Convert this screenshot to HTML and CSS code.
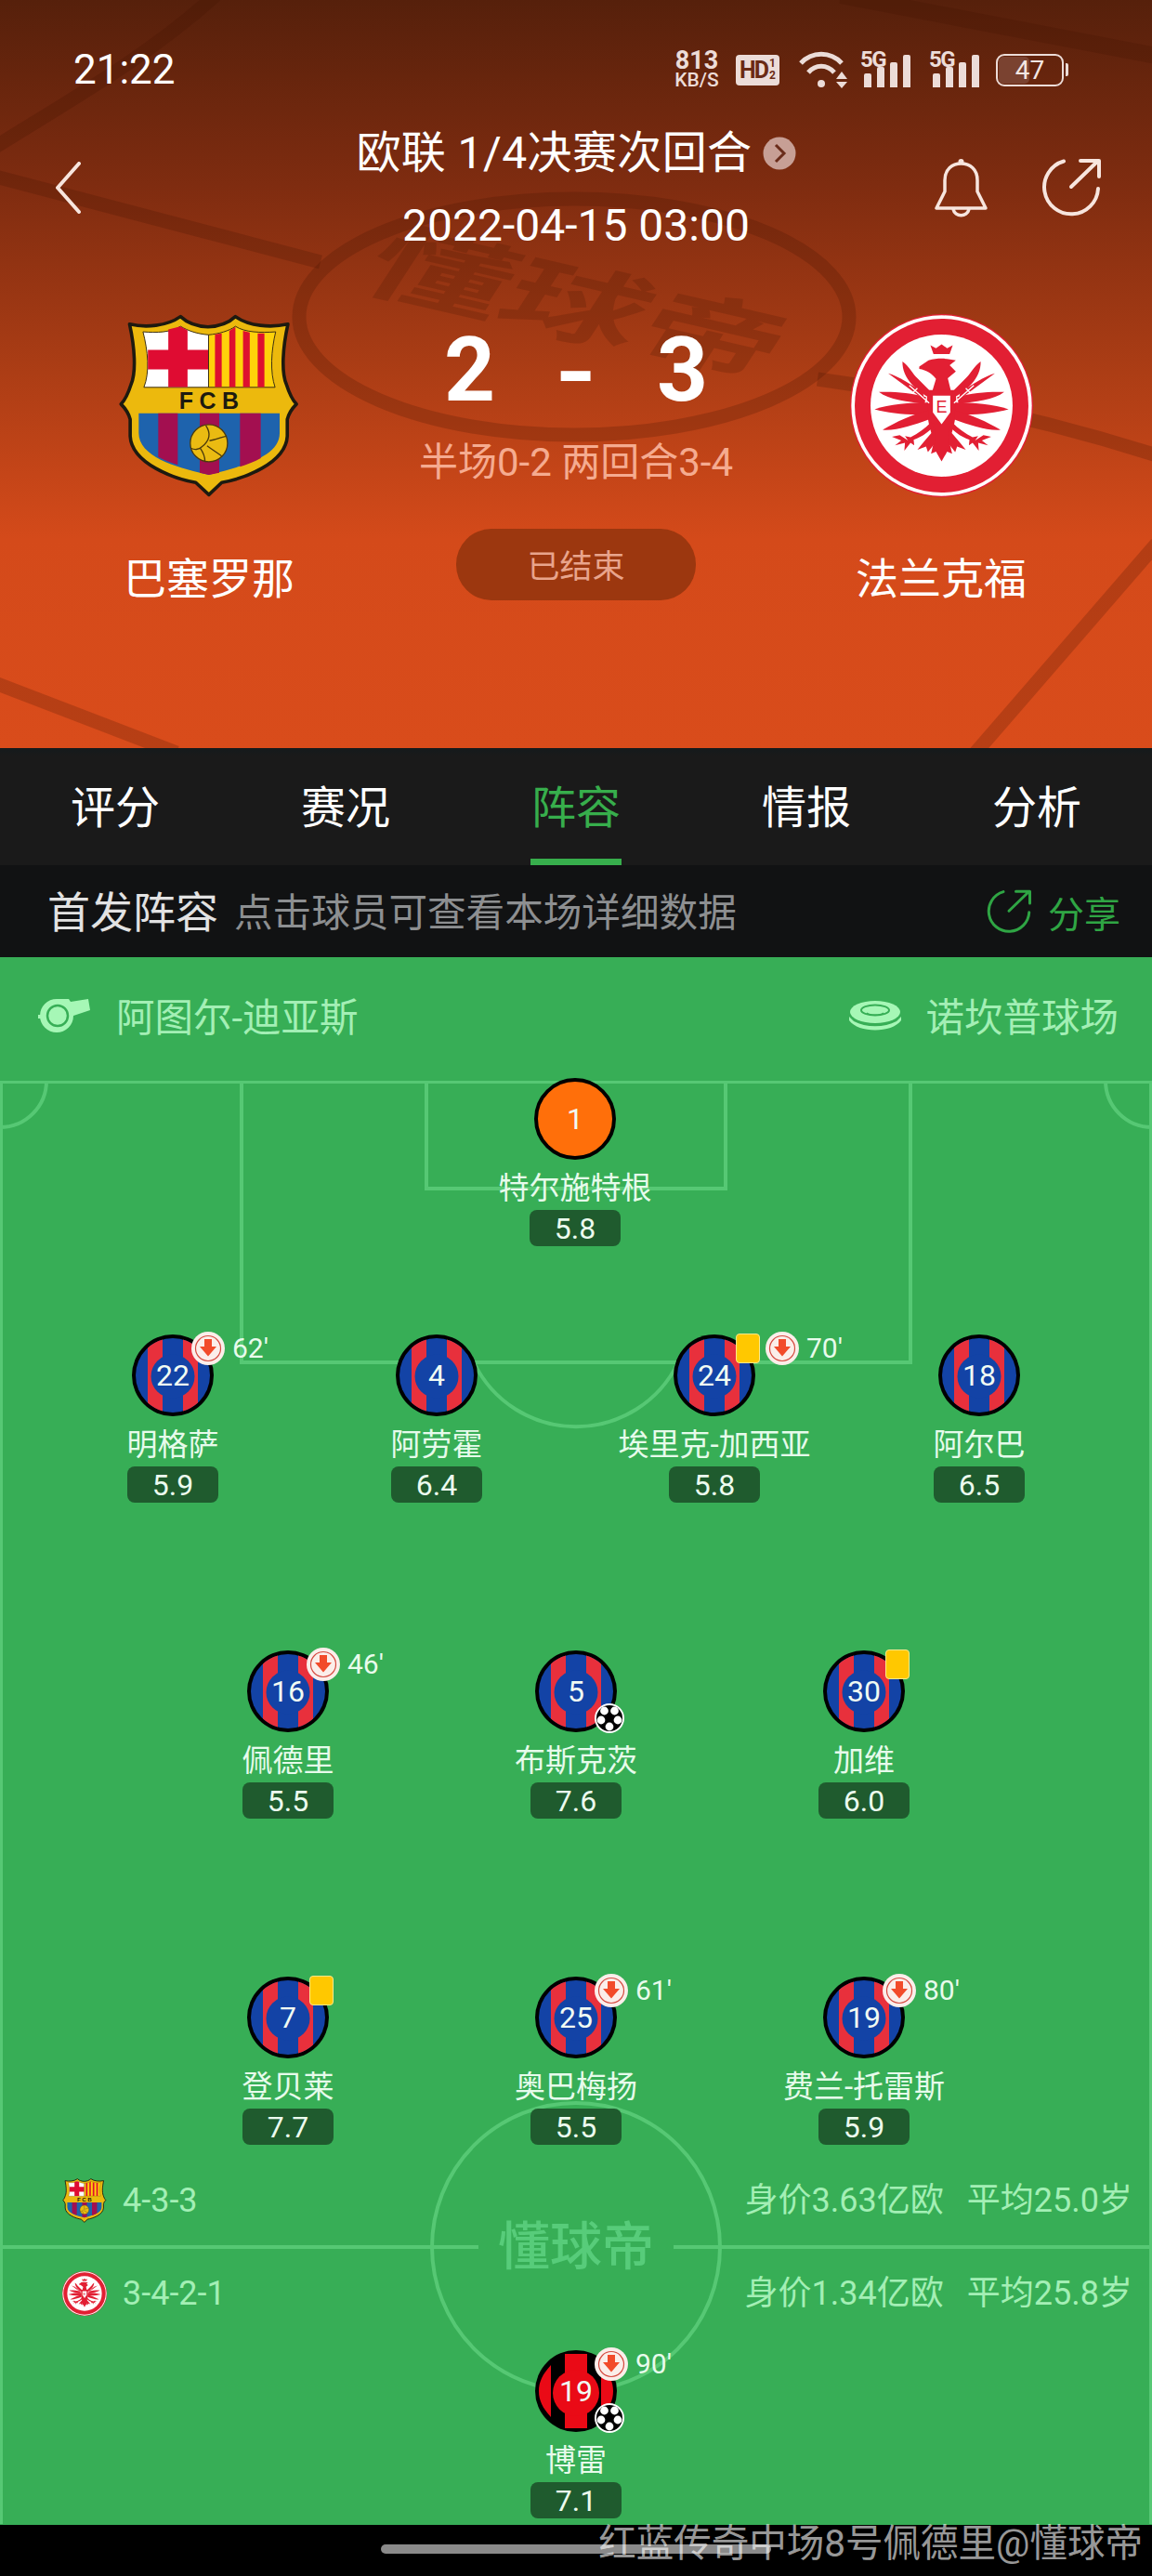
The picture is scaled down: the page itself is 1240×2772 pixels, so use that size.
FILE: index.html
```html
<!DOCTYPE html>
<html lang="zh-CN">
<head>
<meta charset="utf-8">
<title>欧联 1/4决赛次回合 巴塞罗那 2-3 法兰克福</title>
<link rel="stylesheet" href="styles.css">
</head>
<body>
<svg class="defs" width="0" height="0" aria-hidden="true">
  <defs>
    <symbol id="crest-fcb" viewBox="85 80 590 600">
      <path d="M118 113 C170 125 240 120 285 88 C310 112 340 120 375 122 C410 120 440 112 465 88 C510 120 580 125 637 113 C620 190 615 270 632 310 C640 335 650 360 665 375 C650 390 640 405 635 425 L635 480 C630 570 490 620 420 632 L378 672 L335 632 C265 620 125 570 120 480 L120 425 C115 405 105 390 90 375 C105 360 115 335 123 310 C140 270 135 190 118 113 Z" fill="#ecb90d" stroke="#1d1a10" stroke-width="11" stroke-linejoin="round"/>
      <path d="M165 320 C185 270 178 200 162 138 C205 142 255 140 285 120 C310 135 340 145 377 148 V320 Z" fill="#fff" stroke="#3a2e10" stroke-width="3"/>
      <path d="M245 130 L285 120 L308 133 V197 H377 V261 H308 V319 H245 V261 H178 V197 H245 Z" fill="#df0c32"/>
      <path d="M377 148 C410 145 445 135 465 120 C495 140 550 142 597 138 C582 200 578 270 595 320 H377 Z" fill="#ffd20a" stroke="#3a2e10" stroke-width="3"/>
      <path d="M398 146 L420 143 V319 H398 Z M445 135 L465 122 V319 H445 Z M490 135 L512 140 V319 H490 Z M538 143 L560 143 V319 H538 Z" fill="#de0f2f"/>
      <text x="388" y="390" class="crest-text">FCB</text>
      <path d="M148 405 H610 V470 C610 550 480 580 378 607 C280 585 148 550 148 470 Z" fill="#1e63ad"/>
      <path d="M212 405 H276 V574 C255 568 232 558 212 548 Z M348 405 H412 V600 L378 607 L348 600 Z M480 405 H548 V552 C528 564 505 572 480 580 Z" fill="#a30f50"/>
      <circle cx="378" cy="503" r="61" fill="#eabb12" stroke="#4b3a0c" stroke-width="4"/>
      <path d="M368 445 C385 470 380 495 355 515 C345 525 330 525 320 520 M380 495 C410 490 425 480 436 480 M372 512 C390 525 405 535 420 545 M350 520 C360 535 365 550 365 562" fill="none" stroke="#4b3a0c" stroke-width="4"/>
    </symbol>

    <g id="sge-wing">
      <path d="M302 325 C262 305 212 262 214 208 C235 222 248 250 262 262 L305 305 Z"/>
      <path d="M285 332 L168 246 C198 254 245 284 280 308 Z"/>
      <path d="M285 345 C232 337 170 332 138 306 C182 304 240 308 290 322 Z"/>
      <path d="M295 378 C230 382 170 374 124 362 C170 344 240 340 295 340 Z"/>
      <path d="M298 395 C252 412 192 432 150 428 C190 404 250 376 298 365 Z"/>
      <path d="M305 405 C285 425 265 440 240 452 L222 448 L232 462 L205 445 L180 450 L210 462 L190 478 L222 470 L220 495 L240 470 L252 478 L250 460 C280 450 305 430 320 410 Z"/>
      <path d="M320 425 C300 445 280 470 262 492 L290 482 L296 500 L318 472 Z"/>
    </g>
    <symbol id="crest-sge" viewBox="45 55 590 590">
      <circle cx="340" cy="350" r="295" fill="#e21f33"/>
      <circle cx="340" cy="350" r="291" fill="#fff"/>
      <circle cx="340" cy="350" r="280" fill="#e21f33"/>
      <circle cx="340" cy="350" r="229" fill="#fff"/>
      <g fill="#e21f33">
        <path d="M304 155 L322 165 L340 152 L358 165 L376 155 L366 184 H314 Z"/>
        <path d="M268 224 L298 204 C330 195 360 198 386 204 L366 220 L386 240 L360 262 L372 310 H308 L322 264 C310 248 292 236 268 232 Z"/>
        <path d="M296 300 C286 360 298 420 316 462 L306 505 L322 498 L340 530 L358 498 L374 505 L364 462 C382 420 394 360 384 300 Z"/>
        <use href="#sge-wing"/>
        <use href="#sge-wing" transform="translate(680 0) scale(-1 1)"/>
      </g>
      <path d="M236 285 L300 342 M246 310 L262 294 M444 285 L380 342 M434 310 L418 294" fill="none" stroke="#fff" stroke-width="4"/>
      <path d="M312 318 H368 V372 L340 410 L312 372 Z" fill="#fff"/>
      <text x="340" y="372" class="crest-e">E</text>
    </symbol>

    <symbol id="kit-barca" viewBox="0 0 88 88">
      <circle cx="44" cy="44" r="44" fill="#000"/>
      <circle cx="44" cy="44" r="40" fill="#1343a6"/>
      <path d="M17 14.5 A40 40 0 0 1 33 5.5 V82.5 A40 40 0 0 1 17 73.5 Z M55 5.5 A40 40 0 0 1 71 14.5 V73.5 A40 40 0 0 1 55 82.5 Z" fill="#e8303c"/>
      <circle cx="44" cy="45" r="23.5" fill="#1343a6"/>
    </symbol>
    <symbol id="kit-sge" viewBox="0 0 88 88">
      <circle cx="44" cy="44" r="44" fill="#000"/>
      <path d="M17 16 V72 C8 62 4 54 4 44 C4 34 8 26 17 16 Z M71 16 C80 26 84 34 84 44 C84 54 80 62 71 72 Z" fill="#ea0a16"/>
      <path d="M32 4 H56 V84 H32 Z" fill="#ea0a16"/>
      <circle cx="44" cy="46" r="25" fill="#ea0a16"/>
    </symbol>
    <symbol id="sub-off" viewBox="0 0 36 36">
      <circle cx="18" cy="18" r="18" fill="#fbeeea"/>
      <circle cx="18" cy="18" r="13.5" fill="none" stroke="#d5493f" stroke-width="1.2"/>
      <path d="M14 8 H22 V16 H27 L18 26.5 L9 16 H14 Z" fill="#f24b2a"/>
    </symbol>
    <symbol id="ball" viewBox="0 0 32 32">
      <circle cx="16" cy="16" r="16" fill="#fff"/>
      <circle cx="16" cy="16" r="14" fill="#000"/>
      <g fill="#fff">
        <circle cx="10.5" cy="8" r="4.4"/><circle cx="21.5" cy="8" r="4.4"/>
        <circle cx="7" cy="18" r="4.4"/><circle cx="25" cy="18" r="4.4"/>
        <circle cx="16" cy="25" r="4.4"/>
      </g>
    </symbol>
    <symbol id="share" viewBox="0 0 64 64">
      <g fill="none" stroke="currentColor" stroke-width="4" stroke-linecap="round" stroke-linejoin="round">
        <path d="M24 3.5 A29 29 0 1 0 61 33"/>
        <path d="M32 31 L61 3 M42 3 H62 V20"/>
      </g>
    </symbol>
    <symbol id="signal" viewBox="0 0 54 38">
      <path d="M4 25 q0-2 2-2 h4 q2 0 2 2 v13 h-8 Z M18 18 q0-2 2-2 h4 q2 0 2 2 v20 h-8 Z M32 13 q0-2 2-2 h4 q2 0 2 2 v25 h-8 Z M46 5 q0-2 2-2 h4 q2 0 2 2 v33 h-8 Z" fill="#ecdcd8"/>
    </symbol>
  </defs>
</svg>

<div class="screen">
  <header class="hero">
    <svg class="hero-lines" viewBox="0 0 1240 805" aria-hidden="true">
      <g fill="none" stroke="#3f1400" stroke-opacity=".22" stroke-width="15">
        <path d="M232 -5 C160 60 80 105 -5 158"/>
        <path d="M-5 190 L345 282"/>
        <path d="M905 -5 L1245 60" stroke-width="18"/>
        <ellipse cx="618" cy="341" rx="296" ry="127" stroke-width="15"/>
        <path d="M880 408 C1000 425 1120 450 1245 490"/>
        <path d="M-5 735 L190 810"/>
        <path d="M1245 585 L1050 810"/>
      </g>
    </svg>
    <div class="hero-mark" aria-hidden="true">懂球帝</div>

    <div class="status">
      <span class="clock">21:22</span>
      <div class="status-icons">
        <div class="net"><b>813</b><span>KB/S</span></div>
        <div class="hd">HD<span class="frac"><i>1</i><i>2</i></span></div>
        <svg class="wifi" viewBox="0 0 52 40" aria-hidden="true">
          <g fill="none" stroke="#ecdcd8" stroke-width="5">
            <path d="M2 13 C14 0 34 0 46 13"/>
            <path d="M10 23 C18 14 30 14 38 23"/>
          </g>
          <circle cx="24" cy="35" r="4" fill="#ecdcd8"/>
          <path d="M46 22 L52 30 H40 Z M40 33 H52 L46 40 Z" fill="#ecdcd8"/>
        </svg>
        <div class="sim"><span class="sim-tag">5G</span><svg class="sim-bars" aria-hidden="true"><use href="#signal"/></svg></div>
        <div class="sim"><span class="sim-tag">5G</span><svg class="sim-bars" aria-hidden="true"><use href="#signal"/></svg></div>
        <div class="battery"><div class="cell"><i class="charge"></i><span>47</span></div><i class="tip"></i></div>
      </div>
    </div>

    <div class="nav">
      <svg class="back" viewBox="0 0 30 56" aria-hidden="true"><path d="M26 2 L3 28 L26 54" fill="none" stroke="#f7e5de" stroke-width="4" stroke-linecap="round" stroke-linejoin="round"/></svg>
      <div class="fixture">
        <div class="round">
          <span>欧联 1/4决赛次回合</span>
          <svg class="more" viewBox="0 0 36 36" aria-hidden="true"><circle cx="18" cy="18" r="17.5" fill="#c79f95"/><path d="M14 9 L23 18 L14 27" fill="none" stroke="#6a2c1a" stroke-width="3"/></svg>
        </div>
        <div class="kickoff">2022-04-15 03:00</div>
      </div>
      <div class="actions">
        <svg class="bell" viewBox="0 0 57 64" aria-hidden="true">
          <path d="M2 54 H55 L46 36 V24 C46 12 38 6 28.5 6 C19 6 11 12 11 24 V36 Z M20 55 C22 64 35 64 37 55" fill="none" stroke="#f7e5de" stroke-width="3.5" stroke-linejoin="round"/>
          <circle cx="28.5" cy="4" r="3" fill="#f7e5de"/>
        </svg>
        <svg class="share-top" aria-hidden="true"><use href="#share"/></svg>
      </div>
    </div>

    <div class="scoreboard">
      <div class="team">
        <svg class="crest" aria-hidden="true"><use href="#crest-fcb"/></svg>
        <div class="team-name">巴塞罗那</div>
      </div>
      <div class="result">
        <div class="score"><span>2</span><span class="dash">-</span><span>3</span></div>
        <div class="aggregate">半场0-2 两回合3-4</div>
        <div class="state">已结束</div>
      </div>
      <div class="team">
        <svg class="crest" aria-hidden="true"><use href="#crest-sge"/></svg>
        <div class="team-name">法兰克福</div>
      </div>
    </div>
  </header>

  <nav class="tabs">
    <a class="tab">评分</a>
    <a class="tab">赛况</a>
    <a class="tab active">阵容</a>
    <a class="tab">情报</a>
    <a class="tab">分析</a>
  </nav>

  <div class="lineup-bar">
    <strong>首发阵容</strong>
    <span class="hint">点击球员可查看本场详细数据</span>
    <span class="share-link"><svg class="share-small" aria-hidden="true"><use href="#share"/></svg>分享</span>
  </div>

  <section class="pitch">
    <div class="venue">
      <div class="venue-item">
        <svg class="whistle" viewBox="0 0 56 36" aria-hidden="true">
          <path d="M20 0 H33 L35 3 L54 0 L56 12 L38 18 A18 18 0 1 1 20 0 Z" fill="#a6f7b6"/>
          <rect x="0" y="17" width="4" height="4" fill="#a6f7b6"/>
          <circle cx="21" cy="18" r="11" fill="#a6f7b6" stroke="#37ae56" stroke-width="2.5"/>
        </svg>
        <span>阿图尔-迪亚斯</span>
      </div>
      <div class="venue-item">
        <svg class="stadium" viewBox="0 0 56 32" aria-hidden="true">
          <path d="M0 17 L5 22 C18 29 38 29 51 22 L56 17 V21 C46 35 10 35 0 21 Z" fill="#a6f7b6"/>
          <ellipse cx="28" cy="12" rx="27" ry="12" fill="#a6f7b6"/>
          <ellipse cx="28" cy="10" rx="15" ry="5.5" fill="none" stroke="#37ae56" stroke-width="2"/>
          <path d="M19 13 C23 16 33 16 37 13" fill="none" stroke="#37ae56" stroke-width="1.5"/>
        </svg>
        <span>诺坎普球场</span>
      </div>
    </div>

    <div class="field">
      <svg class="field-lines" viewBox="0 0 1240 1553" aria-hidden="true">
        <g fill="none" stroke="#56c874" stroke-width="4">
          <path d="M0 1.5 H1240" stroke-width="3"/>
          <path d="M1.5 0 V1553 M1238.5 0 V1553" stroke-width="3"/>
          <path d="M50 0 A50 50 0 0 1 0 50 M1190 0 A50 50 0 0 0 1240 50"/>
          <path d="M260 0 V303 H980 V0"/>
          <path d="M459 0 V116 H781 V0"/>
          <path d="M510 303 A122 122 0 0 0 730 303"/>
          <path d="M0 1255 H515 M725 1255 H1240"/>
          <circle cx="620" cy="1255" r="155"/>
        </g>
      </svg>
      <div class="field-mark">懂球帝</div>

      <div class="team-stat home-stat">
        <div class="formation"><svg class="mini-crest" aria-hidden="true"><use href="#crest-fcb"/></svg>4-3-3</div>
        <div class="value"><span>身价3.63亿欧</span><span>平均25.0岁</span></div>
      </div>
      <div class="team-stat away-stat">
        <div class="formation"><svg class="mini-crest" aria-hidden="true"><use href="#crest-sge"/></svg>3-4-2-1</div>
        <div class="value"><span>身价1.34亿欧</span><span>平均25.8岁</span></div>
      </div>

      <div class="player" style="left:619px;top:-3px">
        <div class="avatar keeper"><span>1</span></div>
        <div class="name">特尔施特根</div><div class="rating">5.8</div>
      </div>

      <div class="player" style="left:186px;top:273px">
        <div class="avatar"><svg class="kit" aria-hidden="true"><use href="#kit-barca"/></svg><span>22</span>
          <div class="marks"><svg class="sub" aria-hidden="true"><use href="#sub-off"/></svg><em>62'</em></div></div>
        <div class="name">明格萨</div><div class="rating">5.9</div>
      </div>
      <div class="player" style="left:470px;top:273px">
        <div class="avatar"><svg class="kit" aria-hidden="true"><use href="#kit-barca"/></svg><span>4</span></div>
        <div class="name">阿劳霍</div><div class="rating">6.4</div>
      </div>
      <div class="player" style="left:769px;top:273px">
        <div class="avatar"><svg class="kit" aria-hidden="true"><use href="#kit-barca"/></svg><span>24</span>
          <div class="marks"><i class="card"></i><svg class="sub" aria-hidden="true"><use href="#sub-off"/></svg><em>70'</em></div></div>
        <div class="name">埃里克-加西亚</div><div class="rating">5.8</div>
      </div>
      <div class="player" style="left:1054px;top:273px">
        <div class="avatar"><svg class="kit" aria-hidden="true"><use href="#kit-barca"/></svg><span>18</span></div>
        <div class="name">阿尔巴</div><div class="rating">6.5</div>
      </div>

      <div class="player" style="left:310px;top:613px">
        <div class="avatar"><svg class="kit" aria-hidden="true"><use href="#kit-barca"/></svg><span>16</span>
          <div class="marks"><svg class="sub" aria-hidden="true"><use href="#sub-off"/></svg><em>46'</em></div></div>
        <div class="name">佩德里</div><div class="rating">5.5</div>
      </div>
      <div class="player" style="left:620px;top:613px">
        <div class="avatar"><svg class="kit" aria-hidden="true"><use href="#kit-barca"/></svg><span>5</span>
          <svg class="goal" aria-hidden="true"><use href="#ball"/></svg></div>
        <div class="name">布斯克茨</div><div class="rating">7.6</div>
      </div>
      <div class="player" style="left:930px;top:613px">
        <div class="avatar"><svg class="kit" aria-hidden="true"><use href="#kit-barca"/></svg><span>30</span>
          <div class="marks"><i class="card"></i></div></div>
        <div class="name">加维</div><div class="rating">6.0</div>
      </div>

      <div class="player" style="left:310px;top:964px">
        <div class="avatar"><svg class="kit" aria-hidden="true"><use href="#kit-barca"/></svg><span>7</span>
          <div class="marks"><i class="card"></i></div></div>
        <div class="name">登贝莱</div><div class="rating">7.7</div>
      </div>
      <div class="player" style="left:620px;top:964px">
        <div class="avatar"><svg class="kit" aria-hidden="true"><use href="#kit-barca"/></svg><span>25</span>
          <div class="marks"><svg class="sub" aria-hidden="true"><use href="#sub-off"/></svg><em>61'</em></div></div>
        <div class="name">奥巴梅扬</div><div class="rating">5.5</div>
      </div>
      <div class="player" style="left:930px;top:964px">
        <div class="avatar"><svg class="kit" aria-hidden="true"><use href="#kit-barca"/></svg><span>19</span>
          <div class="marks"><svg class="sub" aria-hidden="true"><use href="#sub-off"/></svg><em>80'</em></div></div>
        <div class="name">费兰-托雷斯</div><div class="rating">5.9</div>
      </div>

      <div class="player" style="left:620px;top:1366px">
        <div class="avatar"><svg class="kit" aria-hidden="true"><use href="#kit-sge"/></svg><span>19</span>
          <div class="marks"><svg class="sub" aria-hidden="true"><use href="#sub-off"/></svg><em>90'</em></div>
          <svg class="goal" aria-hidden="true"><use href="#ball"/></svg></div>
        <div class="name">博雷</div><div class="rating">7.1</div>
      </div>
    </div>
  </section>

  <footer class="gesture-bar"><i class="home-pill"></i></footer>
  <div class="credit">红蓝传奇中场8号佩德里@懂球帝</div>
</div>
</body>
</html>
```
FILE: styles.css
```css
* { box-sizing: border-box; }
html, body { margin: 0; padding: 0; background: #000; }
body { font-family: Roboto, "Noto Sans CJK SC", sans-serif; }
.defs { position: absolute; }
.screen { position: relative; width: 1240px; height: 2772px; overflow: hidden; }

.crest-text { font: 700 76px "Liberation Sans", sans-serif; letter-spacing: 20px; fill: #1d1a10; text-anchor: middle; }
.crest-e { font: 400 54px "Liberation Sans", sans-serif; fill: #e21f33; text-anchor: middle; }

/* Header */
.hero {
  position: relative;
  height: 805px;
  overflow: hidden;
  color: #fdf3ee;
  background: linear-gradient(180deg, #56200b 0, #7f2c10 200px, #ac3d15 400px, #d44a1a 580px, #d94c1b 805px);
}
.hero-lines { position: absolute; inset: 0; width: 1240px; height: 805px; }
.hero-mark {
  position: absolute;
  left: 390px;
  top: 245px;
  width: 460px;
  font-size: 150px;
  line-height: 170px;
  font-weight: 700;
  text-align: center;
  white-space: nowrap;
  color: rgba(63, 20, 0, .2);
  transform: rotate(13deg) skewX(-20deg) scaleY(.62);
}
.status, .nav, .scoreboard { position: relative; }

.status { display: flex; justify-content: space-between; align-items: center; height: 70px; margin-top: 40px; padding: 0 90px 0 79px; }
.clock { font-size: 44px; line-height: 50px; color: #fff; }
.status-icons { display: flex; align-items: center; color: #ecdcd8; }
.net { display: flex; flex-direction: column; align-items: center; width: 50px; margin-right: 17px; }
.net b { font-size: 27px; line-height: 21px; font-weight: 700; }
.net span { font-size: 21px; line-height: 20px; font-weight: 500; }
.hd { display: flex; align-items: center; justify-content: center; width: 47px; height: 33px; margin-right: 21px; border-radius: 4px; background: #ecdcd8; color: #6a2a14; font-size: 25px; line-height: 1; font-weight: 700; letter-spacing: -2px; }
.frac { display: flex; flex-direction: column; margin-left: 2px; font-size: 12px; line-height: 13px; letter-spacing: 0; }
.frac i { font-style: normal; }
.wifi { width: 52px; height: 40px; margin-right: 14px; }
.sim { position: relative; width: 54px; height: 38px; margin-right: 20px; }
.sim-tag { position: absolute; left: 0; top: -3px; font-size: 24px; line-height: 22px; font-weight: 700; letter-spacing: -1.5px; }
.sim-bars { display: block; width: 54px; height: 38px; }
.battery { display: flex; align-items: center; margin-left: -2px; }
.cell { position: relative; display: flex; align-items: center; justify-content: center; width: 73px; height: 35px; border: 2.5px solid #ecdcd8; border-radius: 9px; font-size: 28px; color: #f3e6e2; overflow: hidden; }
.cell span { position: relative; }
.charge { position: absolute; left: 1px; top: 1px; bottom: 1px; width: 33px; border-radius: 5px; background: #7a4230; }
.tip { width: 3px; height: 14px; margin-left: 2px; background: #ecdcd8; border-radius: 0 2px 2px 0; }

.nav { display: grid; grid-template-columns: 1fr auto 1fr; align-items: center; height: 142px; margin-top: 21px; padding: 0 55px; }
.back { width: 30px; height: 56px; margin-left: 4px; }
.fixture { display: flex; flex-direction: column; align-items: center; }
.round { display: flex; align-items: center; font-size: 48px; line-height: 68px; letter-spacing: .4px; color: #fff; }
.more { width: 36px; height: 36px; margin-left: 11px; }
.kickoff { margin-top: 14px; font-size: 48px; line-height: 60px; color: #fff; }
.actions { display: flex; justify-content: flex-end; align-items: center; gap: 58px; }
.bell { width: 57px; height: 64px; }
.share-top { width: 64px; height: 64px; color: #f7e5de; }

.scoreboard { display: grid; grid-template-columns: 450px 340px 446px; margin-top: 65px; }
.team { display: flex; flex-direction: column; align-items: center; }
.crest { width: 197px; height: 197px; }
.team-name { margin-top: 57px; font-size: 46px; line-height: 62px; color: #fff; }
.result { display: flex; flex-direction: column; align-items: center; }
.score { display: flex; justify-content: space-between; align-items: center; width: 284px; margin-top: 4px; font-size: 96px; line-height: 112px; font-weight: 700; color: #fff; }
.dash { transform: translateY(3px) scaleX(1.2); }
.aggregate { margin-top: 16px; font-size: 42px; line-height: 56px; color: #f5ab90; white-space: nowrap; }
.state { display: flex; align-items: center; justify-content: center; width: 258px; height: 77px; margin-top: 43px; padding-bottom: 2px; border-radius: 38px; background: #9c370f; font-size: 35px; color: #e8a48c; }

/* Tabs */
.tabs { display: flex; height: 126px; background: linear-gradient(180deg, #141a1c 0, #1a1a1a 8px); }
.tab { position: relative; flex: 1; display: flex; justify-content: center; align-items: center; padding-bottom: 6px; font-size: 48px; color: #fff; }
.tab.active { color: #37ae4c; }
.tab.active::after { content: ""; position: absolute; left: 75px; bottom: 0; width: 98px; height: 7px; background: #37ae4c; }

.lineup-bar { display: flex; align-items: center; height: 99px; padding: 0 34px 0 51px; background: #111213; }
.lineup-bar strong { margin-bottom: 6px; font-size: 46px; font-weight: 400; color: #e2e2e2; }
.hint { margin: 0 0 4px 17px; font-size: 41.6px; color: #8d8f91; }
.share-link { display: flex; align-items: center; margin-left: auto; font-size: 39px; color: #2fa544; }
.share-small { width: 48px; height: 48px; margin-right: 18px; color: #2fa544; }

/* Pitch */
.pitch { height: 1687px; background: #37ae56; }
.venue { display: flex; justify-content: space-between; align-items: center; height: 133px; padding: 0 36px 0 41px; color: #a3efb5; font-size: 41.5px; }
.venue-item { display: flex; align-items: center; }
.venue-item span { margin-bottom: 10px; }
.whistle { width: 56px; height: 36px; margin: 0 28px 8px 0; }
.stadium { width: 56px; height: 32px; margin: 0 26px 8px 0; }
.field { position: relative; height: 1554px; }
.field-lines { position: absolute; inset: 0; width: 1240px; height: 1553px; }
.field-mark { position: absolute; left: 520px; top: 1222px; width: 200px; text-align: center; font-size: 56px; line-height: 66px; font-weight: 500; color: #57cc7a; }

.team-stat { position: absolute; left: 67px; right: 21px; display: flex; justify-content: space-between; align-items: center; color: #a3efb5; font-size: 36px; line-height: 50px; }
.home-stat { top: 1180px; }
.away-stat { top: 1280px; }
.formation { display: flex; align-items: center; }
.mini-crest { width: 48px; height: 48px; margin-right: 17px; }
.value { display: flex; gap: 25px; }

.player { position: absolute; width: 360px; margin-left: -180px; display: flex; flex-direction: column; align-items: center; }
.avatar { position: relative; display: flex; align-items: center; justify-content: center; width: 88px; height: 88px; border-radius: 50%; font-size: 32px; line-height: 88px; color: #f1fbf3; }
.avatar span { position: relative; }
.avatar.keeper { border: 4px solid #000; background: #ff6f0a; }
.kit { position: absolute; inset: 0; width: 88px; height: 88px; }
.marks { position: absolute; left: 64px; top: -3px; display: flex; align-items: center; height: 36px; font-size: 30px; line-height: 36px; }
.sub { flex: none; width: 36px; height: 36px; }
.marks em { margin-left: 8px; font-style: normal; color: #e8fbec; }
.card { flex: none; width: 26px; height: 32px; margin: 0 6px 0 3px; border: 1px solid #ffe98a; border-radius: 4px; background: #ffc800; }
.goal { position: absolute; left: 64px; top: 57px; width: 32px; height: 32px; }
.name { margin-top: 11px; font-size: 33px; line-height: 40px; color: #e6fbeb; white-space: nowrap; }
.rating { display: flex; align-items: center; justify-content: center; width: 98px; height: 39px; margin-top: 3px; border-radius: 8px; background: #1f5b2e; font-size: 32px; color: #ecfbef; }

.gesture-bar { position: relative; height: 55px; background: #000; }
.home-pill { position: absolute; left: 410px; top: 21px; width: 420px; height: 10px; border-radius: 5px; background: #8a8a8a; }
.credit { position: absolute; right: 10px; top: 2709px; font-size: 40.5px; line-height: 56px; color: rgba(255, 255, 255, .62); white-space: nowrap; }
```
